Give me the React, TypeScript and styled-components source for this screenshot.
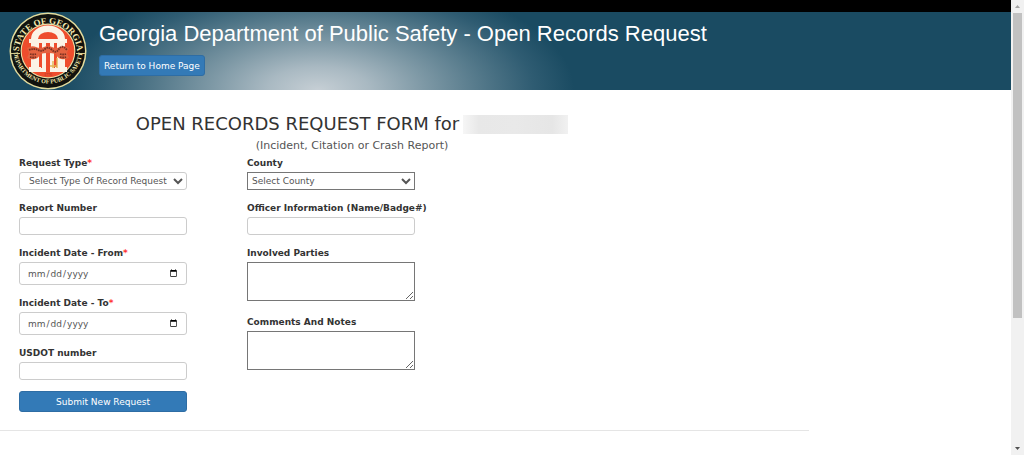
import React from "react";
import styled, { createGlobalStyle, css } from "styled-components";

const GlobalStyle = createGlobalStyle`
  * { box-sizing: border-box; }
  body {
    margin: 0;
    background: #fff;
    color: #333;
    font: 9px/14px Verdana, "DejaVu Sans", sans-serif;
  }
`;

const Page = styled.div`
  display: grid;
  grid-template-columns: minmax(0, 1fr) 13px;
  min-height: 100vh;
`;

const TopBar = styled.div`
  height: 12px;
  background: #000;
`;

const Header = styled.header`
  display: flex;
  gap: 12px;
  min-height: 78px;
  padding-left: 9px;
  background:
    radial-gradient(
      ellipse 256px 116px at 318px 100%,
      #c6cfd5 0%,
      #a9b9c2 20%,
      #7d98a5 42%,
      #4f7587 66%,
      #2f5c72 84%,
      rgba(26, 75, 98, 0) 100%
    ),
    #1a4b62;
`;

const SealImage = styled.svg`
  display: block;
  flex: none;
  width: 78px;
  height: 78px;
`;

const HeaderBody = styled.div`
  display: flex;
  flex-direction: column;
  align-items: flex-start;
  gap: 8px;
  padding-top: 8px;
`;

const SiteTitle = styled.h1`
  margin: 0;
  color: #fff;
  font: 22px/27px "Liberation Sans", Arial, sans-serif;
`;

const Button = styled.button<{ $wide?: boolean }>`
  width: ${(p) => (p.$wide ? "168px" : "auto")};
  height: 21px;
  padding: 0 4px;
  border: 1px solid #2e6da4;
  border-radius: 3px;
  background: #337ab7;
  color: #fff;
  font: 9px/14px Verdana, "DejaVu Sans", sans-serif;
  cursor: pointer;
`;

const Main = styled.main`
  max-width: 809px;
  border-bottom: 1px solid #e5e5e5;
  padding: 21px 0 18px;
`;

const Heading = styled.div`
  width: 704px;
  max-width: 100%;
  padding-bottom: 1px;
  text-align: center;
`;

const FormTitle = styled.h2`
  display: flex;
  align-items: center;
  justify-content: center;
  gap: 4px;
  margin: 0;
  font-size: 18px;
  font-weight: normal;
  line-height: 26px;
`;

const Redacted = styled.span`
  width: 105px;
  height: 19px;
  background: linear-gradient(90deg, #f6f6f6, #e8e8e8 15%, #e9e9e9 50%, #e6e6e6 85%, #f1f1f1);
`;

const FormSubtitle = styled.p`
  margin: 0;
  color: #555;
  font-size: 11px;
  line-height: 18px;
`;

const Form = styled.form`
  display: flex;
  gap: 60px;
  padding-left: 19px;
`;

const Column = styled.div`
  display: flex;
  flex-direction: column;
  align-items: flex-start;
  gap: 11px;
  width: 168px;
`;

const Field = styled.div<{ $tall?: boolean }>`
  display: flex;
  flex-direction: column;
  gap: 2px;
  width: 100%;
  padding-bottom: ${(p) => (p.$tall ? "3px" : "0")};
`;

const Label = styled.label`
  font-weight: bold;
  white-space: nowrap;
`;

const Required = styled.span`
  color: #f33;
`;

const control = css`
  width: 100%;
  margin: 0;
  border: 1px solid #ccc;
  border-radius: 3px;
  background: #fff;
  color: #555;
  font: 9px/14px Verdana, "DejaVu Sans", sans-serif;
`;

const TextInput = styled.input`
  ${control}
  height: 18px;
  padding: 0 8px;
`;

const DateInput = styled.input`
  ${control}
  height: 23px;
  padding: 0 8px 0 7px;

  &::-webkit-datetime-edit-fields-wrapper { padding: 0; }
  &::-webkit-calendar-picker-indicator {
    width: 9px;
    height: 9px;
    padding: 0;
    margin: 0;
  }
`;

const Select = styled.select<{ $plain?: boolean }>`
  ${control}
  height: 18px;
  padding: ${(p) => (p.$plain ? "0" : "0 3px 0 5px")};
  ${(p) => p.$plain && "border-color: #767676; border-radius: 0;"}
`;

const TextArea = styled.textarea`
  ${control}
  display: block;
  height: 39px;
  border-color: #767676;
  border-radius: 0;
`;

const ScrollBar = styled.div`
  display: flex;
  flex-direction: column;
  align-items: center;
  background: #f1f1f1;
`;

const ScrollArrow = styled.svg`
  flex: none;
  width: 13px;
  height: 13px;
`;

const ScrollTrack = styled.div`
  flex: 1;
  width: 9px;
`;

const ScrollThumb = styled.div`
  height: 71%;
  min-height: 302px;
  background: #c1c1c1;
`;

function Seal() {
  return (
    <SealImage viewBox="0 0 78 78" role="img" aria-label="State of Georgia Department of Public Safety seal">
      <defs>
        <path id="seal-top" d="M9.8 41 A29.2 29.2 0 1 1 68.2 41" />
        <path id="seal-bottom" d="M4.5 37 A34.5 34.5 0 0 0 73.5 37" />
      </defs>
      <circle cx="39" cy="39" r="38.5" fill="#e3dc9e" />
      <circle cx="39" cy="39" r="37" fill="#11120e" />
      <circle cx="39" cy="39" r="27.4" fill="#e9dfa6" />
      <circle cx="39" cy="39" r="26.3" fill="#ee4d2d" />
      <g fill="#f4e8b0" fontFamily="Liberation Serif, serif" fontWeight="bold" textAnchor="middle">
        <text fontSize="9">
          <textPath href="#seal-top" startOffset="50%">STATE OF GEORGIA</textPath>
        </text>
        <text fontSize="6">
          <textPath href="#seal-bottom" startOffset="50%">DEPARTMENT OF PUBLIC SAFETY</textPath>
        </text>
      </g>
      <path d="M2 41.5h9M67 41.5h9" stroke="#d5cb8e" strokeWidth="1" />
      <g fill="#fbf3e6">
        <path d="M22 27a17 13.5 0 0 1 34 0h-7a10 7 0 0 0-20 0z" />
        <path d="M20 27h38v4H20z" />
        <path d="M22 31h8v25h-8zM33 31h4v25h-4zM41 31h4v25h-4zM48 31h8v25h-8z" />
        <path d="M20 55h12v5H20zM32 56h5v4h-5zM41 56h5v4h-5zM46 55h12v5H46z" />
      </g>
      <path
        d="M18 36q5-3 9-1t8 0 8 0 8 0 9 1l-2 5 2 5q-4 2-8 1t-5-5q-8-2-16 0-1 4-5 5t-8-1l2-5z"
        fill="#e4623f"
      />
      <path
        d="M20 38q5-2 9 0t7-1 7 1 7-1 8 1M21 42q3 1 6 0M51 42q3 1 6 0M21 45q3 1 6 0M51 45q3 1 6 0"
        fill="none"
        stroke="#7b3122"
        strokeWidth="1.8"
        strokeDasharray="1.6 0.7"
      />
      <path d="M44 49v7M48 46v10M41 54h6" fill="none" stroke="#e3b552" strokeWidth="1.4" />
      <text x="39" y="64" fill="#a63322" fontFamily="Liberation Serif, serif" fontSize="4" textAnchor="middle">1776</text>
    </SealImage>
  );
}

export default function App() {
  return (
    <>
      <GlobalStyle />
      <Page>
        <div>
          <TopBar />
          <Header>
            <Seal />
            <HeaderBody>
              <SiteTitle>Georgia Department of Public Safety - Open Records Request</SiteTitle>
              <Button type="button">Return to Home Page</Button>
            </HeaderBody>
          </Header>
          <Main>
            <Heading>
              <FormTitle>
                OPEN RECORDS REQUEST FORM for
                <Redacted />
              </FormTitle>
              <FormSubtitle>(Incident, Citation or Crash Report)</FormSubtitle>
            </Heading>
            <Form onSubmit={(e) => e.preventDefault()}>
              <Column>
                <Field>
                  <Label htmlFor="type">Request Type<Required>*</Required></Label>
                  <Select id="type"><option>Select Type Of Record Requested</option></Select>
                </Field>
                <Field>
                  <Label htmlFor="report">Report Number</Label>
                  <TextInput id="report" type="text" />
                </Field>
                <Field>
                  <Label htmlFor="from">Incident Date - From<Required>*</Required></Label>
                  <DateInput id="from" type="date" />
                </Field>
                <Field>
                  <Label htmlFor="to">Incident Date - To<Required>*</Required></Label>
                  <DateInput id="to" type="date" />
                </Field>
                <Field>
                  <Label htmlFor="usdot">USDOT number</Label>
                  <TextInput id="usdot" type="text" />
                </Field>
                <Button type="submit" $wide>Submit New Request</Button>
              </Column>
              <Column>
                <Field>
                  <Label htmlFor="county">County</Label>
                  <Select id="county" $plain><option>Select County</option></Select>
                </Field>
                <Field>
                  <Label htmlFor="officer">Officer Information (Name/Badge#)</Label>
                  <TextInput id="officer" type="text" />
                </Field>
                <Field $tall>
                  <Label htmlFor="parties">Involved Parties</Label>
                  <TextArea id="parties" />
                </Field>
                <Field>
                  <Label htmlFor="notes">Comments And Notes</Label>
                  <TextArea id="notes" />
                </Field>
              </Column>
            </Form>
          </Main>
        </div>
        <ScrollBar aria-hidden="true">
          <ScrollArrow viewBox="0 0 13 13"><path d="M4 8l2.5-3L9 8z" fill="#a3a3a3" /></ScrollArrow>
          <ScrollTrack><ScrollThumb /></ScrollTrack>
          <ScrollArrow viewBox="0 0 13 13"><path d="M4 5l2.5 3L9 5z" fill="#505050" /></ScrollArrow>
        </ScrollBar>
      </Page>
    </>
  );
}
